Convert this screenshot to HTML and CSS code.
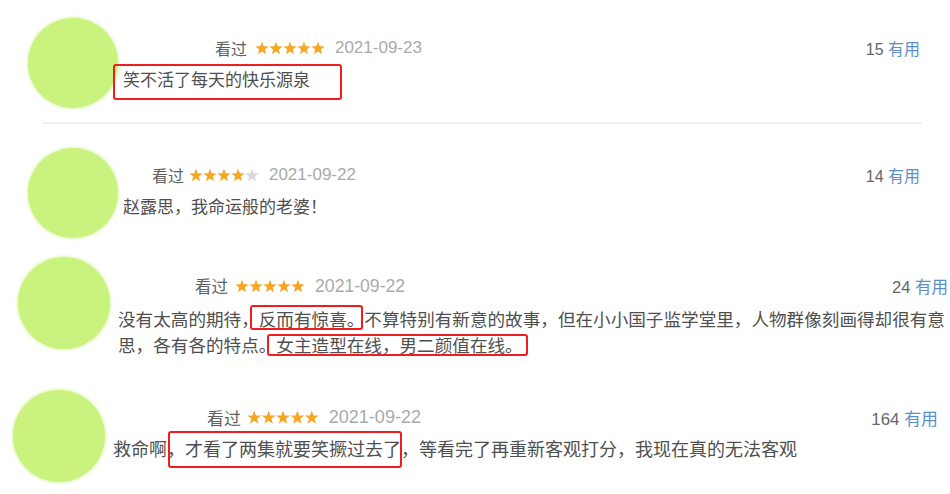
FILE: index.html
```html
<!DOCTYPE html>
<html lang="zh-CN">
<head>
  <meta charset="UTF-8">
  <title>短评</title>
  <meta name="viewport" content="width=device-width, initial-scale=1.0">
  <link rel="stylesheet" href="styles.css">
</head>
<body>

  <svg class="defs" width="0" height="0">
    <symbol id="star" viewBox="0 0 14 14">
      <polygon points="7,0.6 8.7,5.25 13.66,5.44 9.76,8.5 11.11,13.26 7,10.5 2.89,13.26 4.24,8.5 0.34,5.44 5.3,5.25"/>
    </symbol>
  </svg>

  <div class="review r1">
    <div class="avatar"></div>
    <div class="main">
      <div class="head">
        <span class="watched">看过</span>
        <svg class="stars" viewBox="0 0 70 14">
          <use href="#star" x="0" width="14" height="14"/><use href="#star" x="14" width="14" height="14"/><use href="#star" x="28" width="14" height="14"/><use href="#star" x="42" width="14" height="14"/><use href="#star" x="56" width="14" height="14"/>
        </svg>
        <span class="date">2021-09-23</span>
        <span class="votes">15 <em>有用</em></span>
      </div>
      <p class="text"><span class="mark m1">笑不活了每天的快乐源泉</span></p>
    </div>
  </div>

  <div class="divider"></div>

  <div class="review r2">
    <div class="avatar"></div>
    <div class="main">
      <div class="head">
        <span class="watched">看过</span>
        <svg class="stars" viewBox="0 0 70 14">
          <use href="#star" x="0" width="14" height="14"/><use href="#star" x="14" width="14" height="14"/><use href="#star" x="28" width="14" height="14"/><use href="#star" x="42" width="14" height="14"/><use class="off" href="#star" x="56" width="14" height="14"/>
        </svg>
        <span class="date">2021-09-22</span>
        <span class="votes">14 <em>有用</em></span>
      </div>
      <p class="text">赵露思，我命运般的老婆！</p>
    </div>
  </div>

  <div class="review r3">
    <div class="avatar"></div>
    <div class="main">
      <div class="head">
        <span class="watched">看过</span>
        <svg class="stars" viewBox="0 0 70 14">
          <use href="#star" x="0" width="14" height="14"/><use href="#star" x="14" width="14" height="14"/><use href="#star" x="28" width="14" height="14"/><use href="#star" x="42" width="14" height="14"/><use href="#star" x="56" width="14" height="14"/>
        </svg>
        <span class="date">2021-09-22</span>
        <span class="votes">24 <em>有用</em></span>
      </div>
      <p class="text">没有太高的期待，<span class="mark m2">反而有惊喜。</span>不算特别有新意的故事，但在小小国子监学堂里，人物群像刻画得却很有意思，各有各的特点。<span class="mark m3">女主造型在线，男二颜值在线。</span></p>
    </div>
  </div>

  <div class="review r4">
    <div class="avatar"></div>
    <div class="main">
      <div class="head">
        <span class="watched">看过</span>
        <svg class="stars" viewBox="0 0 70 14">
          <use href="#star" x="0" width="14" height="14"/><use href="#star" x="14" width="14" height="14"/><use href="#star" x="28" width="14" height="14"/><use href="#star" x="42" width="14" height="14"/><use href="#star" x="56" width="14" height="14"/>
        </svg>
        <span class="date">2021-09-22</span>
        <span class="votes">164 <em>有用</em></span>
      </div>
      <p class="text">救命啊，<span class="mark m4">才看了两集就要笑撅过去了</span>，等看完了再重新客观打分，我现在真的无法客观</p>
    </div>
  </div>

</body>
</html>
```

FILE: styles.css
```css
body {
  margin: 0;
  background: #fff;
  font-family: "Liberation Sans", "Noto Sans CJK SC", sans-serif;
  font-size: 17px;
  color: #4f4f4f;
}
.defs {
  position: absolute;
}
.review {
  display: flex;
  align-items: flex-start;
  box-sizing: border-box;
}
.avatar {
  flex: none;
  width: 90px;
  height: 90px;
  border-radius: 50%;
  background: #caf27f;
  box-shadow: 0 0 3px 1px rgba(202, 242, 127, 0.6);
}
.main {
  flex: 1;
  min-width: 0;
}
.head {
  display: flex;
  align-items: center;
  height: 24px;
}
.watched {
  font-size: 0.94em;
  color: #5e5e5e;
}
.stars {
  flex: none;
  width: 70px;
  height: 14px;
  margin-left: 8px;
  fill: #f6a623;
}
.stars .off {
  fill: #d9d9d9;
}
.date {
  margin-left: 10px;
  color: #aaa;
}
.votes {
  margin-left: auto;
  font-size: 0.94em;
  color: #666;
}
.votes em {
  font-style: normal;
  color: #5b8fc6;
}
.text {
  margin: 8px 0 0;
  line-height: 26px;
}

/* red highlight frames */
.mark {
  position: relative;
}
.mark::after {
  content: "";
  position: absolute;
  border: 2px solid #ef1d1d;
  border-radius: 3px;
}
.m1::after { left: -10px; right: -32px; top: -7px; bottom: -10px; }
.m2::after { left: -9px; right: 1px; top: -5px; bottom: 0; }
.m3::after { left: -9px; right: -5px; top: -2px; bottom: 0; }
.m4::after { left: -17px; right: -1px; top: -9px; bottom: -8px; }

.divider {
  height: 2px;
  margin: 0 28px 0 42px;
  background: #f2f2f2;
}

/* each strip sits a little differently */
.r1 { height: 122px; }
.r1 .avatar { margin: 18px 0 0 28px; }
.r1 .main { margin: 36px 30px 0 5px; }
.r1 .head { padding-left: 92px; }

.r2 { height: 126px; }
.r2 .avatar { margin: 24px 0 0 28px; }
.r2 .main { margin: 39px 30px 0 5px; }
.r2 .head { padding-left: 29px; }
.r2 .stars { margin-left: 5px; }

.r3 { height: 125px; font-size: 17.6px; }
.r3 .avatar { width: 92px; height: 92px; margin: 7px 0 0 18px; }
.r3 .main { margin: 24px 2px 0 8px; }
.r3 .head { padding-left: 77px; }
.r3 .stars { margin-left: 7px; }
.r3 .text { margin-top: 9px; }

.r4 { height: 119px; font-size: 18px; }
.r4 .avatar { width: 92px; height: 92px; margin: 15px 0 0 13px; }
.r4 .main { margin: 30px 12px 0 8px; }
.r4 .head { padding-left: 94px; }
.r4 .stars { margin-left: 6px; width: 72px; height: 14.4px; }
```
